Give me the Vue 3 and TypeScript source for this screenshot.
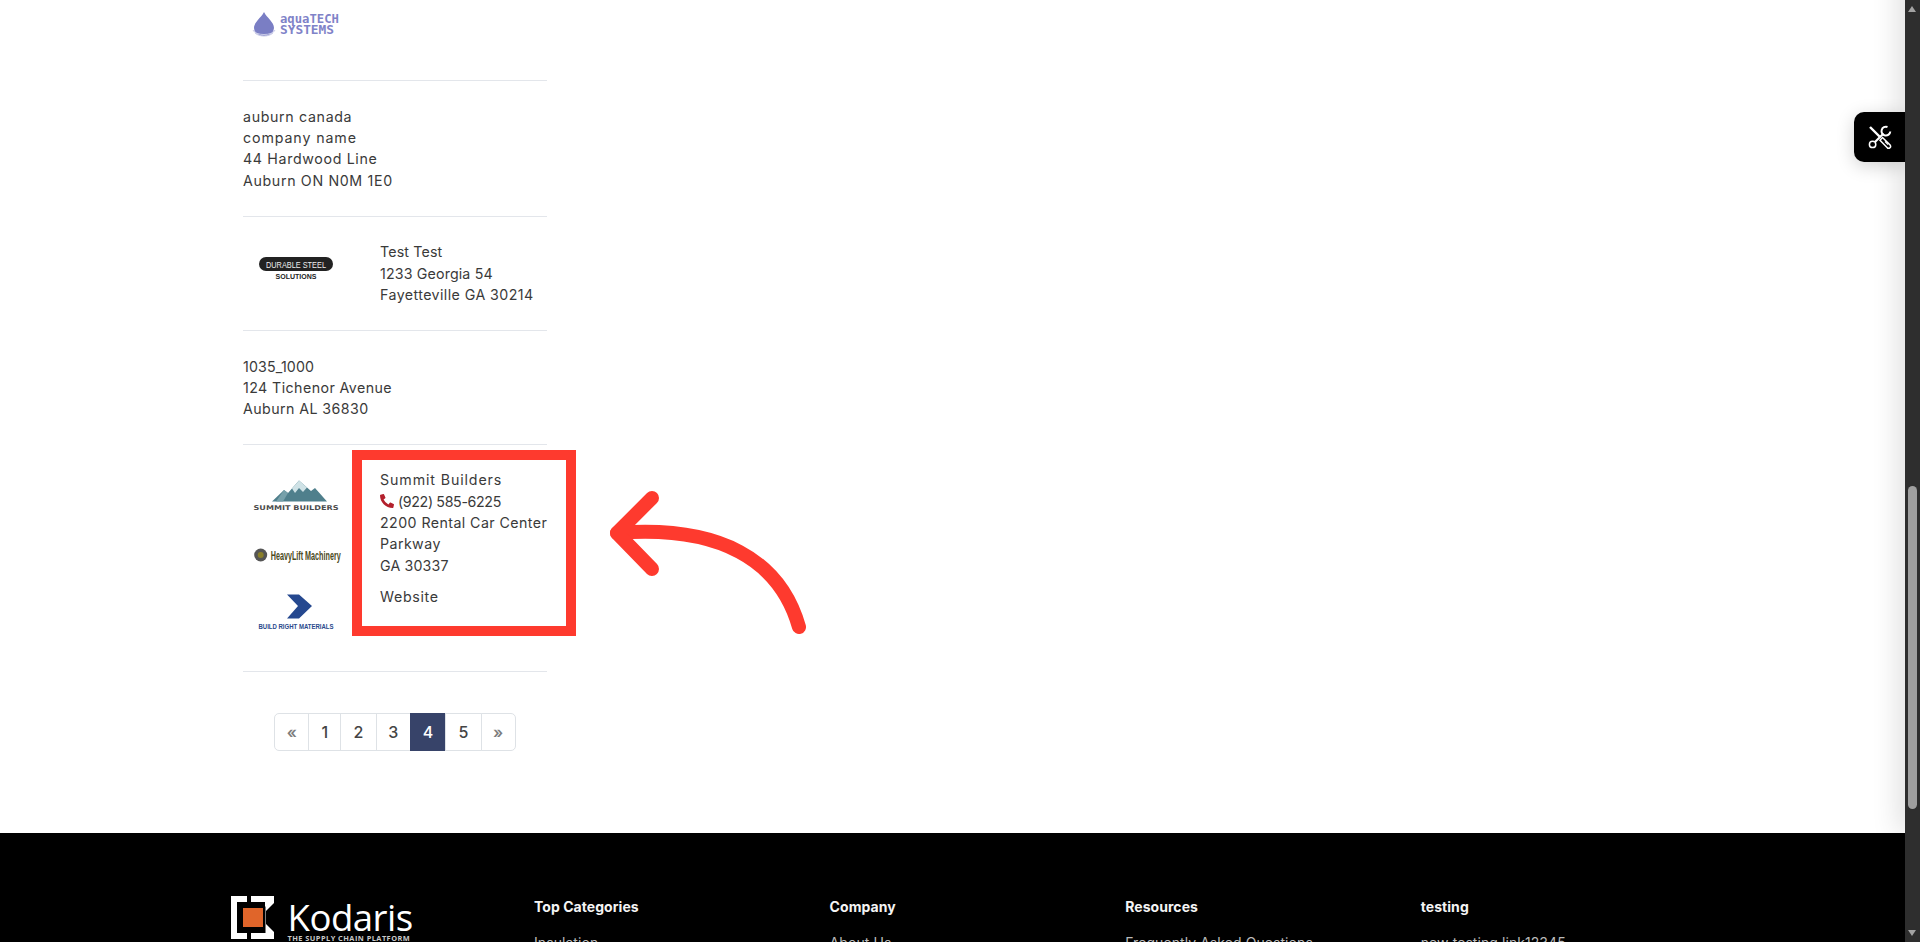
<script setup lang="ts">
interface PageItem { label: string; cls: string; active?: boolean; muted?: boolean }
const pages: PageItem[] = [
  { label: '«', cls: 'w34', muted: true },
  { label: '1', cls: 'w32' },
  { label: '2', cls: 'w36' },
  { label: '3', cls: 'w34' },
  { label: '4', cls: 'w36', active: true },
  { label: '5', cls: 'w36' },
  { label: '»', cls: 'w34', muted: true },
]
const footerCols = [
  { title: 'Top Categories', link: 'Insulation' },
  { title: 'Company', link: 'About Us' },
  { title: 'Resources', link: 'Frequently Asked Questions' },
  { title: 'testing', link: 'new testing link12345' },
]
</script>

<template>
  <div class="page">
    <div class="viewport">
      <main class="main">
        <div class="column">
          <section class="row row-first">
            <div class="logo-col">
              <svg class="logo-svg" width="106" height="40" viewBox="0 0 106 40">
                <path d="M21 12 C24 18 31 22 31 28 A10 8 0 0 1 11 28 C11 22 18 18 21 12 Z" fill="#7a7ec4" />
                <path d="M10 30 C12 36 30 36 32 30 M12 33 C16 37 26 37 30 33" fill="none" stroke="#c9cbe8" stroke-width="1" />
                <text x="37" y="22.5" class="aqua" textLength="59" lengthAdjust="spacingAndGlyphs">aquaTECH</text>
                <text x="37" y="33.5" class="aqua" textLength="54" lengthAdjust="spacingAndGlyphs">SYSTEMS</text>
              </svg>
            </div>
          </section>

          <section class="row">
            <div class="addr">
              <div class="ls-mid">auburn canada</div>
              <div class="ls-wide">company name</div>
              <div class="ls-mid">44 Hardwood Line</div>
              <div class="ls-mid">Auburn ON N0M 1E0</div>
            </div>
          </section>

          <section class="row with-logo">
            <div class="logo-col">
              <svg width="106" height="40" viewBox="0 0 106 40">
                <rect x="16" y="16" width="74" height="14" rx="7" fill="#222" />
                <text x="53" y="26.5" class="dur" text-anchor="middle" textLength="60" lengthAdjust="spacingAndGlyphs">DURABLE STEEL</text>
                <text x="53" y="37.5" class="sol" text-anchor="middle" textLength="41" lengthAdjust="spacingAndGlyphs">SOLUTIONS</text>
              </svg>
            </div>
            <div class="addr">
              <div class="ls-tight">Test Test</div>
              <div class="ls-tight">1233 Georgia 54</div>
              <div>Fayetteville GA 30214</div>
            </div>
          </section>

          <section class="row">
            <div class="addr">
              <div class="ls-tight">1035_1000</div>
              <div>124 Tichenor Avenue</div>
              <div>Auburn AL 36830</div>
            </div>
          </section>

          <section class="row with-logo row-last">
            <div class="logo-col logo-stack">
              <svg width="106" height="54" viewBox="0 0 106 54">
                <path d="M29 32.5 L41 21 L45 24 L56 11.5 L68 22 L72 19 L84 32.5 Z" fill="#4f7f8c" />
                <path d="M49 19.5 L56 11.5 L64 18.5 L60 23 L56 19 L52 24 Z" fill="#cfe2e6" />
                <path d="M41 21 L45 24 L40 32.5 L33 32.5 Z" fill="#76a0aa" />
                <text x="53" y="41" class="sum" text-anchor="middle" textLength="85" lengthAdjust="spacingAndGlyphs">SUMMIT BUILDERS</text>
              </svg>
              <svg width="106" height="54" viewBox="0 0 106 54">
                <circle cx="17.7" cy="27" r="6.5" fill="#555" />
                <circle cx="17.7" cy="27" r="3" fill="#8a7f2a" />
                <text x="27.7" y="31.5" class="heavy" textLength="70" lengthAdjust="spacingAndGlyphs">HeavyLift Machinery</text>
              </svg>
              <svg width="106" height="54" viewBox="0 0 106 54">
                <path d="M44 7.5 L56 7.5 L69 19 L56 31.5 L44 31.5 L55 19 Z" fill="#25488f" />
                <text x="53" y="41.5" class="build" text-anchor="middle" textLength="75" lengthAdjust="spacingAndGlyphs">BUILD RIGHT MATERIALS</text>
              </svg>
            </div>
            <div class="addr">
              <div class="ls-wide">Summit Builders</div>
              <div class="phone">
                <svg class="phone-icon" width="14" height="14" viewBox="0 0 512 512">
                  <path fill="#b3202c" d="M497.39 361.8l-112-48a24 24 0 0 0-28 6.9l-49.6 60.6A370.66 370.66 0 0 1 130.6 204.11l60.6-49.6a23.94 23.94 0 0 0 6.9-28l-48-112A24.16 24.16 0 0 0 122.6.61l-104 24A24 24 0 0 0 0 48c0 256.5 207.9 464 464 464a24 24 0 0 0 23.4-18.6l24-104a24.29 24.29 0 0 0-14.01-27.6z" />
                </svg>
                <span class="ls-digits">(922) 585-6225</span>
              </div>
              <div>2200 Rental Car Center</div>
              <div>Parkway</div>
              <div class="ls-tight">GA 30337</div>
              <div class="website ls-mid">Website</div>
            </div>
          </section>

          <nav class="pager">
            <span
              v-for="p in pages"
              :key="p.label"
              class="cell"
              :class="[p.cls, { active: p.active, muted: p.muted }]"
            >{{ p.label }}</span>
          </nav>
        </div>
      </main>

      <footer class="footer">
        <div class="brand">
          <svg class="mark" width="43" height="43" viewBox="0 0 43 43">
            <path d="M0 0H16V6H6V37H16V43H0Z" fill="#fff" />
            <path d="M20 0H43V7L35 15V28L43 36V43H20V37H34.5V6H20Z" fill="#fff" />
            <path d="M28 6H36L36 9L34 11V6Z" fill="#fff" />
            <rect x="12" y="12" width="20" height="19" fill="#e0652a" />
          </svg>
          <div class="brand-text">
            <div class="brand-name">Kodaris</div>
            <div class="brand-tag">THE SUPPLY CHAIN PLATFORM</div>
          </div>
        </div>
        <div v-for="c in footerCols" :key="c.title" class="f-col">
          <div class="f-title">{{ c.title }}</div>
          <div class="f-link">{{ c.link }}</div>
        </div>
      </footer>

      <div class="edge-shadow"></div>

      <div class="highlight"></div>
      <svg class="arrow" width="220" height="160" viewBox="0 0 220 160">
        <g fill="none" stroke="#fe3a2e" stroke-width="14" stroke-linecap="round" stroke-linejoin="round">
          <path d="M189 137 C170 70 110 35 7 43" />
          <path d="M42 8 L7 43 L42 79" />
        </g>
      </svg>

      <button class="tool-btn" type="button" aria-label="Tools">
        <svg width="24" height="24" viewBox="0 0 24 24" fill="none" stroke="#fff">
          <path d="M2 2 L12.5 12.5" stroke-width="2.4" />
          <path d="M14.5 12.5 L22.3 20.3 A2 2 0 0 1 19.5 23 L12 15.3 Z" stroke-width="1.5" />
          <path d="M17 16.5 L20 19.5" stroke-width="1.1" />
          <circle cx="4.6" cy="19.4" r="3.2" stroke-width="1.5" />
          <path d="M7 17 L15.5 8.5" stroke-width="2.2" />
          <path d="M19.5 2 A4.4 4.4 0 1 0 22.3 6.5" stroke-width="2" />
        </svg>
      </button>
    </div>

    <aside class="scrollbar">
      <span class="tri up"></span>
      <span class="thumb"></span>
      <span class="tri down"></span>
    </aside>
  </div>
</template>

<style>
html, body { margin: 0; overflow: hidden; background: #fff; }
</style>

<style scoped>
.page {
  display: flex;
  width: 1920px;
  height: 942px;
  overflow: hidden;
  font-family: Inter, "Noto Sans", sans-serif;
  color: #3a3a3a;
}
.viewport {
  position: relative;
  width: 1905px;
  height: 942px;
  overflow: hidden;
  background: #fff;
}
.main {
  height: 833px;
  padding-left: 243px;
  box-sizing: border-box;
}
.column { width: 304px; }
.row {
  display: flex;
  padding: 24.67px 0;
  border-bottom: 1px solid #e3e6eb;
}
.row-first {
  height: 81px;
  box-sizing: border-box;
  padding: 0;
  align-items: flex-start;
}
.row-first .logo-col { height: 40px; }
.row-last { padding-top: 24px; padding-bottom: 30px; }
.logo-col {
  width: 106px;
  flex: none;
}
.with-logo .logo-col { margin-right: 31px; }
.logo-col svg { display: block; }
.logo-stack {
  display: flex;
  flex-direction: column;
  gap: 4.67px;
}
.addr {
  font-size: 14.22px;
  line-height: 21.33px;
  letter-spacing: 0.42px;
  white-space: nowrap;
}
.ls-wide { letter-spacing: 0.88px; }
.ls-mid { letter-spacing: 0.65px; }
.ls-tight { letter-spacing: 0.15px; }
.ls-digits { letter-spacing: -0.36px; }
.phone { display: flex; align-items: center; gap: 4px; }
.phone-icon { flex: none; }
.website { margin-top: 10px; }

.aqua { font: 700 12.5px "DejaVu Sans Mono", monospace; fill: #7f83c8; }
.dur { font: 400 9.5px "Liberation Sans", sans-serif; fill: #eee; }
.sol { font: 700 6.5px "Liberation Sans", sans-serif; fill: #222; }
.sum { font: 700 6.6px "DejaVu Sans", sans-serif; fill: #4c4c4c; }
.heavy { font: 700 13px "Liberation Sans", sans-serif; fill: #4a4a22; }
.build { font: 700 6.5px "Liberation Sans", sans-serif; fill: #2a4a8c; }

.pager {
  display: flex;
  justify-content: center;
  margin-top: 41px;
}
.cell {
  display: flex;
  align-items: center;
  justify-content: center;
  box-sizing: border-box;
  height: 38.7px;
  font-size: 16px;
  font-weight: 500;
  color: #444;
  background: #fff;
  border: 1px solid #dee2e6;
  margin-left: -1px;
}
.cell:first-child { margin-left: 0; border-radius: 5px 0 0 5px; }
.cell:last-child { border-radius: 0 5px 5px 0; }
.w32 { width: 33px; }
.w34 { width: 34.8px; }
.w36 { width: 36.6px; }
.cell.muted { color: #7d7d7d; font-weight: 600; }
.cell.active { background: #374369; color: #fff; border-color: #374369; }

.footer {
  display: grid;
  grid-template-columns: 303px 295.6px 295.6px 295.6px 295.6px;
  height: 109px;
  box-sizing: border-box;
  padding: 63px 0 0 231px;
  background: #000;
  color: #fff;
}
.brand { display: flex; gap: 13.5px; align-items: flex-start; }
.mark { flex: none; }
.brand-text { padding-top: 3.5px; }
.brand-name {
  font-family: "Open Sans", sans-serif;
  font-size: 36.6px;
  line-height: 34px;
  letter-spacing: -0.5px;
  color: #fff;
}
.brand-tag {
  font-family: "Open Sans", sans-serif;
  font-size: 7.4px;
  line-height: 8px;
  font-weight: 700;
  letter-spacing: 0.45px;
  color: #c8c8c8;
  white-space: nowrap;
}
.f-title {
  font-size: 14px;
  font-weight: 700;
  line-height: 21px;
  letter-spacing: 0.05px;
  color: #f4f4f4;
}
.f-link {
  font-size: 14px;
  line-height: 21px;
  letter-spacing: 0.07px;
  margin-top: 15px;
  color: #bbb;
  white-space: nowrap;
}

.edge-shadow {
  position: absolute;
  top: -40px;
  bottom: 109px;
  right: -12px;
  width: 12px;
  box-shadow: 0 0 30px rgba(0, 0, 0, 0.28);
}
.highlight {
  position: absolute;
  left: 352px;
  top: 450px;
  width: 224px;
  height: 186px;
  box-sizing: border-box;
  border: 10px solid #fe3a2e;
}
.arrow {
  position: absolute;
  left: 610px;
  top: 490px;
}
.tool-btn {
  position: absolute;
  left: 1854px;
  top: 112px;
  width: 51px;
  height: 50px;
  padding: 0;
  border: 0;
  border-radius: 10px 0 0 10px;
  background: #000;
  box-shadow: 0 4px 18px rgba(0, 0, 0, 0.18);
  display: flex;
  align-items: center;
  justify-content: center;
}

.scrollbar {
  position: relative;
  width: 15px;
  height: 942px;
  flex: none;
  background: #2e2e2e;
}
.thumb {
  position: absolute;
  left: 2.5px;
  top: 486px;
  width: 9.5px;
  height: 323px;
  border-radius: 5px;
  background: #9f9f9f;
}
.tri {
  position: absolute;
  left: 3px;
  width: 0;
  height: 0;
  border-left: 4.5px solid transparent;
  border-right: 4.5px solid transparent;
}
.tri.up { top: 6px; border-bottom: 6px solid #a3a3a3; }
.tri.down { top: 930px; border-top: 6px solid #a3a3a3; }
</style>
